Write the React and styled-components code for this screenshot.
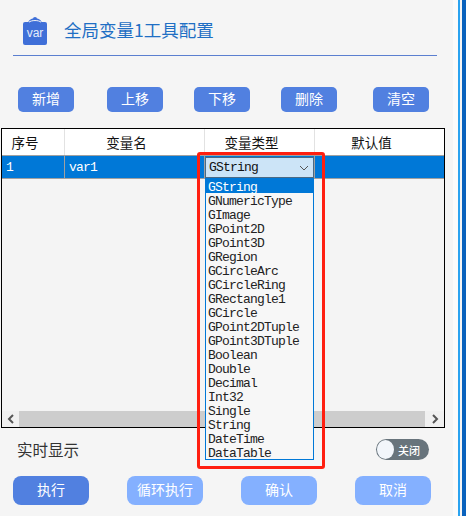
import styled, { createGlobalStyle } from 'styled-components';

const UI_FONT = '"Noto Sans CJK SC", "Noto Sans", sans-serif';
const MONO_FONT = '"Liberation Mono", "Noto Sans CJK SC", monospace';

const TYPE_OPTIONS = [
  'GString',
  'GNumericType',
  'GImage',
  'GPoint2D',
  'GPoint3D',
  'GRegion',
  'GCircleArc',
  'GCircleRing',
  'GRectangle1',
  'GCircle',
  'GPoint2DTuple',
  'GPoint3DTuple',
  'Boolean',
  'Double',
  'Decimal',
  'Int32',
  'Single',
  'String',
  'DateTime',
  'DataTable',
];

// gap is the space before each button, the toolbar is not evenly spaced
const TOOLBAR_ACTIONS = [
  { label: '新增', gap: 0 },
  { label: '上移', gap: 33 },
  { label: '下移', gap: 31 },
  { label: '删除', gap: 31 },
  { label: '清空', gap: 36 },
];

const GlobalStyle = createGlobalStyle`
  html, body {
    margin: 0;
    padding: 0;
    background: #f5f5f5;
  }
`;

function VarIcon() {
  return (
    <svg width="24" height="28" viewBox="0 0 24 28">
      <path d="M5 6 C6 2.5 9 1.5 10 1.5 Q10 0 12 0 Q14 0 14 1.5 C15 1.5 18 2.5 19 6 Z" fill="#3f6fd8" />
      <path d="M0 7 Q0 5 2 5 H22 Q24 5 24 7 V26 Q24 28 22 28 H2 Q0 28 0 26 Z" fill="#3f6fd8" />
      <path d="M6 5.2 C8 3 16 3 18 5.2" fill="none" stroke="#f5f5f5" strokeWidth="1" />
      <text x="12" y="20" textAnchor="middle" fontSize="12" fill="#e4ecfb" fontFamily="Liberation Sans">
        var
      </text>
    </svg>
  );
}

export default function App() {
  return (
    <Page>
      <GlobalStyle />
      <Panel>
        <Header>
          <VarIcon />
          <Title>全局变量1工具配置</Title>
        </Header>
        <Toolbar>
          {TOOLBAR_ACTIONS.map(({ label, gap }) => (
            <ToolButton key={label} $gap={gap}>
              {label}
            </ToolButton>
          ))}
        </Toolbar>
        <Table>
          <HeadRow>
            <HeadCell $w={63}>序号</HeadCell>
            <HeadCell $w={140}>变量名</HeadCell>
            <HeadCell $w={110}>变量类型</HeadCell>
            <HeadCell $w={129}>默认值</HeadCell>
          </HeadRow>
          <DataRow>
            <DataCell $w={63}>1</DataCell>
            <DataCell $w={140}>var1</DataCell>
            <DataCell $w={110} />
            <DataCell $w={129} />
          </DataRow>
          <TableBody />
          <ScrollBar>
            <ScrollArrow $w={17}>
              <svg width="8" height="10" viewBox="0 0 8 10">
                <path d="M6 1 L2 5 L6 9" fill="none" stroke="#555" strokeWidth="2" />
              </svg>
            </ScrollArrow>
            <ScrollTrack />
            <ScrollArrow $w={19}>
              <svg width="8" height="10" viewBox="0 0 8 10">
                <path d="M2 1 L6 5 L2 9" fill="none" stroke="#555" strokeWidth="2" />
              </svg>
            </ScrollArrow>
          </ScrollBar>
        </Table>
        <OptionRow>
          <OptionLabel>实时显示</OptionLabel>
          <Toggle>
            <ToggleKnob />
            <ToggleText>关闭</ToggleText>
          </Toggle>
        </OptionRow>
        <Footer>
          <FooterButton $primary>执行</FooterButton>
          <FooterButton>循环执行</FooterButton>
          <FooterButton>确认</FooterButton>
          <FooterButton>取消</FooterButton>
        </Footer>
        <Highlight>
          <SelectBox>
            <span>GString</span>
            <svg width="10" height="6" viewBox="0 0 10 6">
              <path d="M1 1 L5 5 L9 1" fill="none" stroke="#555" strokeWidth="1" />
            </svg>
          </SelectBox>
          <OptionList>
            {TYPE_OPTIONS.map((name, i) => (
              <Option key={name} $selected={i === 0}>
                {name}
              </Option>
            ))}
          </OptionList>
        </Highlight>
      </Panel>
      <WindowEdge />
    </Page>
  );
}

const Page = styled.div`
  display: flex;
  width: 466px;
  height: 516px;
  overflow: hidden;
  background: #f5f5f5;
`;

const Panel = styled.div`
  position: relative;
  width: 453px;
  flex: none;
`;

const WindowEdge = styled.div`
  flex: 1;
  background: linear-gradient(
    to right,
    #fbfbfb 0 5px,
    #2aa3f0 5px 7px,
    #f5f5f5 7px 9px,
    #0a62bd 9px
  );
`;

const Header = styled.div`
  display: flex;
  align-items: center;
  gap: 17px;
  height: 56px;
  margin: 0 16px 0 13px;
  padding: 6px 0 0 10px;
  border-bottom: 1px solid #5b7fd0;
  box-sizing: border-box;
`;

const Title = styled.div`
  margin-top: -2px;
  font-family: ${UI_FONT};
  font-size: 17.5px;
  color: #1f6fc4;
`;

const Toolbar = styled.div`
  display: flex;
  margin: 31px 0 0 18px;
`;

const ToolButton = styled.div`
  display: flex;
  align-items: center;
  justify-content: center;
  width: 56px;
  height: 25px;
  margin-left: ${({ $gap }) => $gap}px;
  padding-bottom: 3px;
  border-radius: 5px;
  box-sizing: border-box;
  background: #5180e0;
  font-family: ${UI_FONT};
  font-size: 14px;
  color: #fff;
`;

const Table = styled.div`
  display: flex;
  flex-direction: column;
  height: 300px;
  margin: 16px 8px 0 1px;
  border: 1px solid #000;
  box-sizing: border-box;
  background: #f4f4f4;
`;

const HeadRow = styled.div`
  display: flex;
  height: 26px;
  flex: none;
  background: #fff;
`;

const HeadCell = styled.div`
  display: flex;
  align-items: center;
  justify-content: center;
  width: ${({ $w }) => $w}px;
  flex: none;
  padding-right: 16px;
  border-right: 1px solid #e2e2e2;
  box-sizing: border-box;
  font-family: ${UI_FONT};
  font-size: 13.5px;
  color: #111;

  &:last-child {
    border-right: none;
  }
`;

const DataRow = styled.div`
  display: flex;
  height: 24px;
  flex: none;
  border-top: 1px solid #a0a0a0;
  border-bottom: 1px solid #a0a0a0;
  box-sizing: border-box;
  background: #0078d7;
`;

const DataCell = styled.div`
  display: flex;
  align-items: center;
  width: ${({ $w }) => $w}px;
  flex: none;
  padding-left: 4px;
  border-right: 1px solid #a0a0a0;
  box-sizing: border-box;
  font-family: ${MONO_FONT};
  font-size: 13px;
  letter-spacing: -0.8px;
  color: #fff;

  &:last-child {
    border-right: none;
  }
`;

const TableBody = styled.div`
  flex: 1;
`;

const ScrollBar = styled.div`
  display: flex;
  height: 16px;
  flex: none;
  background: #f0f0f0;
`;

const ScrollArrow = styled.div`
  display: flex;
  align-items: center;
  justify-content: center;
  width: ${({ $w }) => $w}px;
  flex: none;
`;

const ScrollTrack = styled.div`
  flex: 1;
  background: #cdcdcd;
`;

const OptionRow = styled.div`
  display: flex;
  align-items: center;
  justify-content: space-between;
  height: 21px;
  margin: 11px 24px 0 17px;
`;

const OptionLabel = styled.div`
  margin-top: -2px;
  font-family: ${UI_FONT};
  font-size: 15.5px;
  color: #333;
`;

const Toggle = styled.div`
  display: flex;
  align-items: center;
  width: 53px;
  height: 21px;
  border-radius: 11px;
  background: #68747c;
`;

const ToggleKnob = styled.div`
  width: 17px;
  height: 19px;
  margin-left: 1px;
  border-radius: 50%;
  background: #f2f6fb;
`;

const ToggleText = styled.div`
  margin-left: 4px;
  font-family: ${UI_FONT};
  font-size: 11px;
  font-weight: 500;
  color: #fff;
`;

const Footer = styled.div`
  display: flex;
  justify-content: space-between;
  margin: 16px 22px 0 13px;
`;

const FooterButton = styled.div`
  display: flex;
  align-items: center;
  justify-content: center;
  width: 76px;
  height: 29px;
  padding-bottom: 3px;
  border-radius: 8px;
  box-sizing: border-box;
  background: ${({ $primary }) => ($primary ? '#5180e0' : '#84b0ff')};
  font-family: ${UI_FONT};
  font-size: 14px;
  color: #fff;
`;

const Highlight = styled.div`
  position: absolute;
  left: 197px;
  top: 152px;
  width: 128px;
  height: 317px;
  padding: 2px 0 0 5px;
  border: 3px solid #ff1f10;
  border-radius: 3px;
  box-sizing: border-box;
`;

const SelectBox = styled.div`
  display: flex;
  align-items: center;
  justify-content: space-between;
  width: 109px;
  height: 21px;
  padding: 0 4px 0 3px;
  border: 1px solid #4a6a85;
  box-sizing: border-box;
  background: #cce4f7;
  font-family: ${MONO_FONT};
  font-size: 13px;
  letter-spacing: -0.8px;
  color: #111;
`;

const OptionList = styled.div`
  width: 109px;
  border: 1px solid #0078d7;
  box-sizing: border-box;
  background: #f7f7f7;
`;

const Option = styled.div`
  height: 14px;
  padding-left: 2px;
  line-height: 17px;
  font-family: ${MONO_FONT};
  font-size: 13px;
  letter-spacing: -0.8px;
  color: ${({ $selected }) => ($selected ? '#fff' : '#222')};
  background: ${({ $selected }) => ($selected ? '#0078d7' : 'transparent')};
`;
